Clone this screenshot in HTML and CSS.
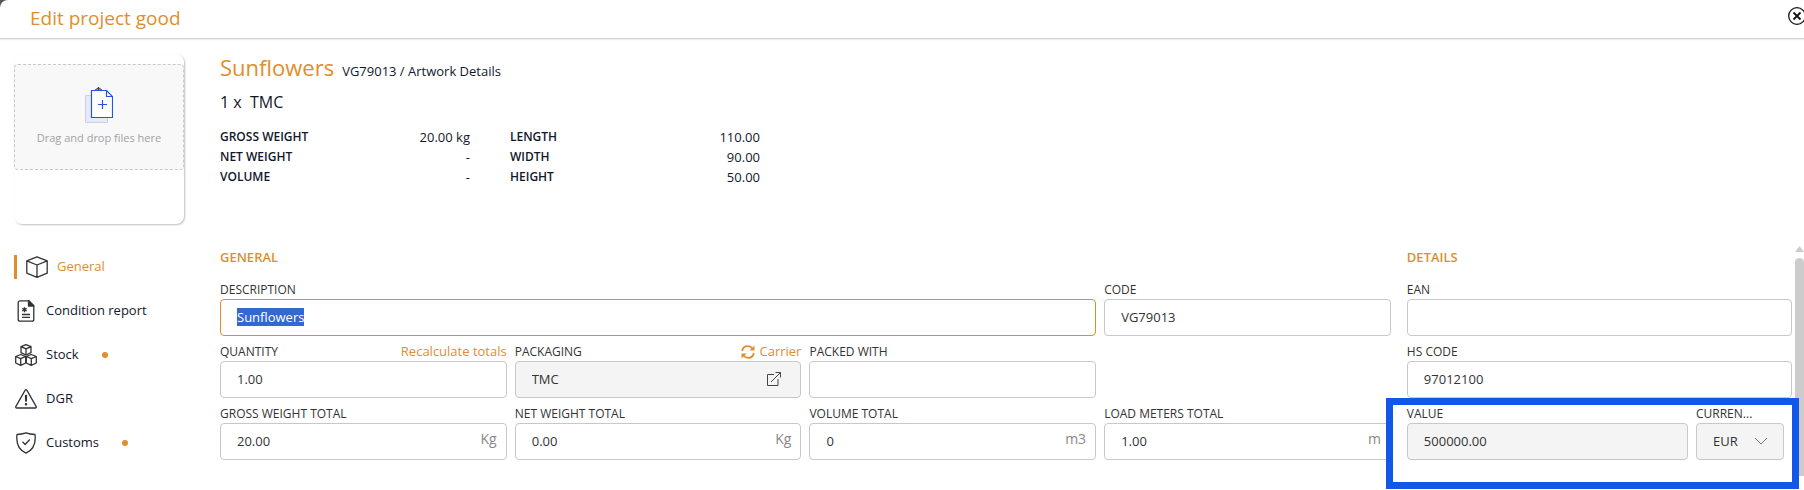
FILE: index.html
```
<!DOCTYPE html>
<html lang="en">
<head>
  <meta charset="UTF-8">
  <meta name="viewport" content="width=device-width, initial-scale=1.0">
  <title>Edit project good</title>
  <link rel="stylesheet" href="styles.css">
</head>
<body>
  <div class="dialog">
    <header class="dialog-header">
      <h1>Edit project good</h1>
      <button class="close-btn" type="button" aria-label="Close">
        <svg width="18" height="18" viewBox="0 0 18 18" fill="none" stroke="#111">
          <circle cx="9" cy="9" r="8.3" stroke-width="1.3"/>
          <path d="M5.5 5.5l7 7M12.5 5.5l-7 7" stroke-width="1.8"/>
        </svg>
      </button>
    </header>

    <div class="dialog-body">
      <aside class="sidebar">
        <div class="upload-card">
          <div class="dropzone">
            <svg width="28" height="38" viewBox="0 0 28 38" fill="none">
              <path d="M.5 9.5h22v27H.5z" fill="#e6eafb" stroke="#ccd0e0"/>
              <path d="M9.500 4.500l4-3 4 3M13.500 1v3M11.500 4l2-2 2 2" stroke="#444"/>
              <path d="M6.500 4.500h15l6 6v21h-21z" fill="#fff" stroke="#2b50e8" stroke-width="1.200"/>
              <path d="M21.500 4.500v6h6M17.500 14v9M13 18.500h9" stroke="#2b50e8" stroke-width="1.200"/>
            </svg>
            <span>Drag and drop files here</span>
          </div>
        </div>

        <nav class="nav">
          <a class="nav-item active" href="#general">
            <svg class="nav-icon" viewBox="0 0 22 22">
              <path d="M11 .8l10.200 4v12.400L11 21.300.8 17.200V4.800zM.8 4.800L11 9l10.200-4.200M11 9v12"/>
            </svg>
            <span>General</span>
          </a>
          <a class="nav-item" href="#condition">
            <svg class="nav-icon" viewBox="0 0 22 22">
              <path d="M5.200.8h8.600l5 5v13.400a2 2 0 0 1-2 2H5.200a2 2 0 0 1-2-2V2.800a2 2 0 0 1 2-2z"/>
              <path class="solid" d="M13.500.8v5.200h5.300z"/>
              <path d="M9.500 7.200v5M7.300 8.400l4.400 2.600M11.700 8.400l-4.400 2.600M7 14.500h8M7 17.300h8"/>
            </svg>
            <span>Condition report</span>
          </a>
          <a class="nav-item" href="#stock">
            <svg class="nav-icon" viewBox="0 0 22 22">
              <path d="M11 .7l5 2v6l-5 2.300-5-2.300v-6zM6 2.700l5 2.200 5-2.200M11 4.900v6"/>
              <path d="M5.700 10.500l5 2v6.500l-5 2.300-5-2.300v-6.500zM.7 12.500l5 2.200 5-2.200M5.700 14.700v6.500"/>
              <path d="M16.300 10.500l5 2v6.500l-5 2.300-5-2.300v-6.500zM11.300 12.500l5 2.200 5-2.200M16.300 14.700v6.500"/>
            </svg>
            <span>Stock</span>
            <i class="dot"></i>
          </a>
          <a class="nav-item" href="#dgr">
            <svg class="nav-icon" viewBox="0 0 22 22">
              <path d="M10.200 2.200L.9 18.300q-.6 1.700 1 1.700h18.200q1.600 0 1-1.700L11.800 2.200q-.8-1-1.600 0z"/>
              <path class="solid" d="M10.500 7.500h1l-.2 5.500h-.6z"/>
              <circle class="solid" cx="11" cy="16.300" r=".6"/>
            </svg>
            <span>DGR</span>
          </a>
          <a class="nav-item" href="#customs">
            <svg class="nav-icon" viewBox="0 0 22 22">
              <path d="M11 .8c3 1 6 1.500 9 1.700 1 8-1 15-9 18.700C3 17.500 1 10.500 2 2.500c3-.2 6-.7 9-1.700z"/>
              <path d="M7.500 9.800l2.700 2.700 4.500-5"/>
            </svg>
            <span>Customs</span>
            <i class="dot"></i>
          </a>
        </nav>
      </aside>

      <main class="main">
        <section class="summary">
          <div class="summary-title">
            <h2>Sunflowers</h2>
            <span>VG79013 / Artwork Details</span>
          </div>
          <div class="summary-package">1 x&nbsp; TMC</div>
          <div class="measures">
            <dl>
              <dt>GROSS WEIGHT</dt><dd>20.00 kg</dd>
              <dt>NET WEIGHT</dt><dd>-</dd>
              <dt>VOLUME</dt><dd>-</dd>
            </dl>
            <dl>
              <dt>LENGTH</dt><dd>110.00</dd>
              <dt>WIDTH</dt><dd>90.00</dd>
              <dt>HEIGHT</dt><dd>50.00</dd>
            </dl>
          </div>
        </section>

        <div class="form-area">
          <form class="form">
            <section class="general">
              <h3>GENERAL</h3>
              <div class="general-grid">
                <div class="field wide">
                  <div class="field-head"><label for="description">DESCRIPTION</label></div>
                  <div class="control focused"><input type="text" id="description" value="Sunflowers"></div>
                </div>
                <div class="field">
                  <div class="field-head"><label for="code">CODE</label></div>
                  <div class="control"><input type="text" id="code" value="VG79013"></div>
                </div>
                <div class="field">
                  <div class="field-head">
                    <label for="quantity">QUANTITY</label>
                    <a href="#recalculate">Recalculate totals</a>
                  </div>
                  <div class="control"><input type="text" id="quantity" value="1.00"></div>
                </div>
                <div class="field">
                  <div class="field-head">
                    <label for="packaging">PACKAGING</label>
                    <a href="#carrier">
                      <svg width="14" height="14" viewBox="0 0 14 14" fill="none" stroke="currentColor" stroke-width="1.800">
                        <path d="M1.200 6C1.700 3 4 1.200 6.800 1.200c2.200 0 3.700 1 4.900 2.600M12.800 8c-.5 3-2.800 4.800-5.600 4.800-2.200 0-3.700-1-4.900-2.600"/>
                        <path d="M13.500.5v5h-5zM.5 13.500v-5h5z" fill="currentColor" stroke="none"/>
                      </svg>
                      Carrier
                    </a>
                  </div>
                  <div class="control readonly">
                    <input type="text" id="packaging" value="TMC" readonly>
                    <button class="open-btn" type="button" aria-label="Open packaging">
                      <svg width="14" height="14" viewBox="0 0 14 14" fill="none" stroke="#444">
                        <path d="M7 2.500H.5v11H11V7M4 10L13.500.5M8.500.5h5v5"/>
                      </svg>
                    </button>
                  </div>
                </div>
                <div class="field">
                  <div class="field-head"><label for="packedWith">PACKED WITH</label></div>
                  <div class="control"><input type="text" id="packedWith"></div>
                </div>
                <div class="field row-start">
                  <div class="field-head"><label for="grossTotal">GROSS WEIGHT TOTAL</label></div>
                  <div class="control"><input type="text" id="grossTotal" value="20.00"><span class="unit">Kg</span></div>
                </div>
                <div class="field">
                  <div class="field-head"><label for="netTotal">NET WEIGHT TOTAL</label></div>
                  <div class="control"><input type="text" id="netTotal" value="0.00"><span class="unit">Kg</span></div>
                </div>
                <div class="field">
                  <div class="field-head"><label for="volumeTotal">VOLUME TOTAL</label></div>
                  <div class="control"><input type="text" id="volumeTotal" value="0"><span class="unit">m3</span></div>
                </div>
                <div class="field">
                  <div class="field-head"><label for="loadMeters">LOAD METERS TOTAL</label></div>
                  <div class="control"><input type="text" id="loadMeters" value="1.00"><span class="unit">m</span></div>
                </div>
              </div>
            </section>

            <section class="details">
              <h3>DETAILS</h3>
              <div class="field">
                <div class="field-head"><label for="ean">EAN</label></div>
                <div class="control"><input type="text" id="ean"></div>
              </div>
              <div class="field">
                <div class="field-head"><label for="hsCode">HS CODE</label></div>
                <div class="control"><input type="text" id="hsCode" value="97012100"></div>
              </div>
              <div class="value-row">
                <div class="field value-field">
                  <div class="field-head"><label for="value">VALUE</label></div>
                  <div class="control readonly"><input type="text" id="value" value="500000.00" readonly></div>
                </div>
                <div class="field currency-field">
                  <div class="field-head"><label for="currency">CURREN...</label></div>
                  <div class="control readonly">
                    <select id="currency"><option>EUR</option></select>
                    <svg class="chevron" width="14" height="8" viewBox="0 0 14 8" fill="none" stroke="#777">
                      <path d="M1 1l6 6 6-6"/>
                    </svg>
                  </div>
                </div>
                <div class="highlight"></div>
              </div>
            </section>
          </form>

          <div class="scrollbar">
            <div class="scroll-up"></div>
            <div class="scroll-thumb"></div>
          </div>
        </div>
      </main>
    </div>
  </div>

  <script src="dialog.js"></script>
</body>
</html>
```
FILE: styles.css
```
* {
  box-sizing: border-box;
}

body {
  margin: 0;
  font-family: "Open Sans", "Noto Sans", sans-serif;
  font-size: 13px;
  color: #12182c;
  background: #55555c;
}

h1, h2, h3, dl, dd {
  margin: 0;
  font-weight: 400;
}

a {
  color: inherit;
  text-decoration: none;
}

button {
  padding: 0;
  border: none;
  background: none;
  cursor: pointer;
}

svg {
  display: block;
  flex: none;
}

.dialog {
  min-height: 100vh;
  background: white;
  border-top-left-radius: 8px;
  overflow: hidden;
}

.dialog-header {
  display: flex;
  justify-content: space-between;
  height: 39px;
  padding-left: 30px;
  border-bottom: 1px solid #d5d5d5;
  box-shadow: 0 1px 1px #eee;
}

.dialog-header h1 {
  font-size: 19px;
  line-height: 36px;
  color: #df8e2c;
}

.close-btn {
  align-self: flex-start;
  margin-top: 7px;
  margin-right: -2px;
}

.dialog-body {
  display: flex;
}

/* sidebar */
.sidebar {
  flex: none;
  width: 220px;
  padding: 15px 0 0 14px;
}

.upload-card {
  width: 170px;
  height: 170px;
  padding-top: 10px;
  border-radius: 8px;
  box-shadow: 1px 1px 2px rgba(0, 0, 0, 0.25);
}

.dropzone {
  display: flex;
  flex-direction: column;
  align-items: center;
  gap: 6px;
  height: 106px;
  padding-top: 21px;
  border: 1px dashed #c8c8c8;
  border-radius: 4px;
  background: #f8f8f8;
  font-size: 11px;
  color: #a0a2a8;
}

.nav {
  margin-top: 31px;
}

.nav-item {
  display: flex;
  align-items: center;
  gap: 9px;
  height: 24px;
  margin-bottom: 20px;
  padding-left: 1px;
}

.nav-item.active {
  padding-left: 9px;
  border-left: 3px solid #df8e2c;
  color: #df8e2c;
}

.nav-item span {
  padding-bottom: 2px;
}

.nav-icon {
  width: 22px;
  height: 22px;
  fill: none;
  stroke: #333;
  stroke-width: 1.3;
  stroke-linejoin: round;
}

.nav-icon .solid {
  fill: #333;
}

.dot {
  width: 6px;
  height: 6px;
  margin-left: 14px;
  border-radius: 50%;
  background: #df8e2c;
}

/* summary */
.main {
  flex: 1;
  min-width: 0;
}

.summary {
  height: 201px;
  padding-top: 12px;
}

.summary-title {
  display: flex;
  align-items: baseline;
  gap: 8px;
  line-height: 32px;
}

.summary-title h2 {
  font-size: 22px;
  color: #df8e2c;
}

.summary-package {
  font-size: 16px;
  line-height: 30px;
}

.measures {
  display: flex;
  gap: 40px;
  padding-top: 10px;
}

.measures dl {
  display: grid;
  grid-template-columns: 1fr auto;
  width: 250px;
  line-height: 20px;
}

.measures dt {
  font-size: 12px;
  font-weight: 600;
}

.measures dd {
  text-align: right;
}

/* form */
.form-area {
  display: flex;
  gap: 3px;
}

.form {
  display: grid;
  flex: 1;
  grid-template-columns: 76fr 25fr;
  gap: 16px;
}

.form h3 {
  height: 34px;
  font-size: 13px;
  font-weight: 600;
  line-height: 34px;
  color: #df8e2c;
}

.general-grid {
  display: grid;
  grid-template-columns: repeat(4, 1fr);
  column-gap: 8px;
}

.wide {
  grid-column: span 3;
}

.row-start {
  grid-column: 1;
}

.field {
  min-width: 0;
}

.field-head {
  display: flex;
  align-items: flex-start;
  justify-content: space-between;
  height: 25px;
  line-height: 31px;
}

.field-head label {
  font-size: 12px;
  color: #333;
}

.field-head a {
  display: flex;
  align-items: center;
  gap: 4px;
  color: #df8e2c;
}

.control {
  display: flex;
  align-items: center;
  height: 37px;
  padding-bottom: 2px;
  border: 1px solid #c8c8c8;
  border-radius: 4px;
  background: white;
}

.control.focused {
  border-color: #df8e2c;
}

.control.readonly {
  background: #f4f4f4;
}

.control input,
.control select {
  flex: 1;
  width: 100%;
  min-width: 0;
  padding: 0 0 0 16px;
  border: none;
  outline: none;
  background: transparent;
  font-family: inherit;
  font-size: 13px;
  color: #333;
  appearance: none;
}

.control input::selection {
  background: #3367d1;
  color: white;
}

.unit {
  padding: 0 9px 4px 0;
  font-size: 14px;
  color: #888;
}

.open-btn {
  margin-right: 19px;
}

.chevron {
  margin-right: 15px;
}

.value-row {
  position: relative;
  display: flex;
  gap: 8px;
  padding-right: 8px;
}

.value-field {
  flex: 1;
}

.currency-field {
  width: 88px;
}

/* frame over the value and currency fields */
.highlight {
  position: absolute;
  inset: 0 -7px -29px -21px;
  border: 7px solid #1158e8;
  pointer-events: none;
}

.scrollbar {
  width: 9px;
  padding-top: 6px;
}

.scroll-up {
  width: 9px;
  height: 6px;
  background: #ccc;
  clip-path: polygon(50% 0, 100% 100%, 0 100%);
}

.scroll-thumb {
  height: 218px;
  margin-top: 6px;
  border-radius: 5px 5px 0 0;
  background: #ccc;
}
```
FILE: dialog.js
```
const description = document.getElementById('description');
description.focus();
description.select();
```
